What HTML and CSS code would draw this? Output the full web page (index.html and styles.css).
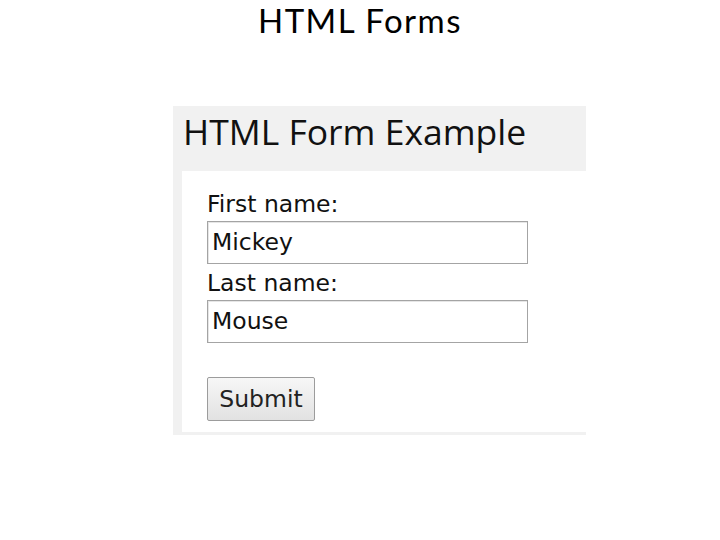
FILE: index.html
```html
<!DOCTYPE html>
<html>
<head>
<meta charset="utf-8">
<link rel="stylesheet" href="styles.css">
</head>
<body>
<h1 class="slide-title">HTML Forms</h1>
<div class="panel">
  <div class="panel-head">HTML Form Example</div>
  <form class="panel-body">
    <label class="lbl">First name:</label>
    <div class="field">Mickey</div>
    <label class="lbl">Last name:</label>
    <div class="field">Mouse</div>
    <div class="btn">Submit</div>
  </form>
</div>
</body>
</html>
```

FILE: styles.css
```css
html, body {
  margin: 0;
  padding: 0;
  background: #ffffff;
}
body {
  width: 720px;
  height: 540px;
  overflow: hidden;
}
.slide-title {
  margin: 0;
  height: 40px;
  font-family: "Lato", "Open Sans", sans-serif;
  font-weight: 400;
  font-size: 33px;
  letter-spacing: 1.5px;
  line-height: 40px;
  text-align: center;
  color: #000;
}
.panel {
  margin: 66px 0 0 173px;
  width: 413px;
  background: #f1f1f1;
  padding-bottom: 3px;
}
.panel-head {
  height: 65px;
  padding-left: 10px;
  font-family: "Open Sans", sans-serif;
  font-size: 35.5px;
  line-height: 51px;
  color: #111;
}
.panel-body {
  margin: 0 0 0 9px;
  background: #ffffff;
  padding: 19px 0 11px 25px;
  display: flex;
  flex-direction: column;
  align-items: flex-start;
  font-family: "DejaVu Sans", Verdana, sans-serif;
  font-size: 23.5px;
  color: #111;
}
.lbl {
  line-height: 28px;
  height: 28px;
}
.field {
  margin-top: 3px;
  margin-bottom: 5px;
  box-sizing: border-box;
  width: 321px;
  height: 43px;
  border: 1px solid #a4a4a4;
  box-shadow: inset 1px 1px 0 #e6e6e6;
  padding-left: 4px;
  line-height: 41px;
  color: #111;
}
.btn {
  margin-top: 29px;
  width: 108px;
  height: 44px;
  box-sizing: border-box;
  border: 1px solid #9c9c9c;
  border-radius: 2px;
  background: linear-gradient(#f7f7f7, #e2e2e2);
  text-align: center;
  line-height: 42px;
  color: #222;
}
```
